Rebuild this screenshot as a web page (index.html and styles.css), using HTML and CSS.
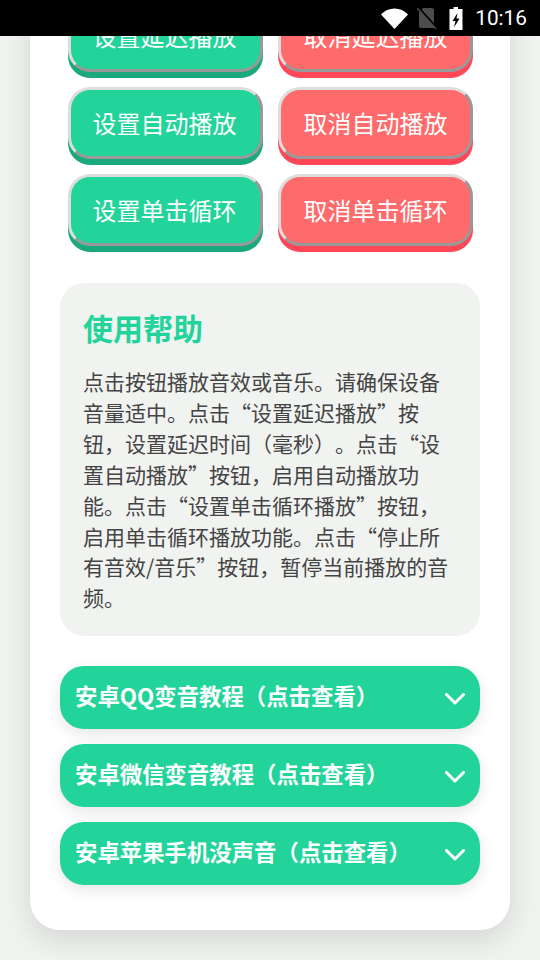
FILE: index.html
```html
<!DOCTYPE html>
<html lang="zh">
<head>
<meta charset="utf-8">
<title>音效</title>
<link rel="stylesheet" href="styles.css">
</head>
<body>
<div class="status">
  <svg class="i-wifi" viewBox="0 0 27 21"><path d="M0 6.500C3.500 2.500 8.300 0.500 13.500 0.500S23.500 2.500 27 6.500L13.500 21z"/></svg>
  <svg class="i-sim" viewBox="0 0 20 22"><path class="sim" d="M6 1H14.500Q17 1 17 3.500V21H4Q2 21 2 19V5z"/><path class="gap" d="M1 0L20 21"/><path class="slash" d="M0 1L19 22"/></svg>
  <svg class="i-bat" viewBox="0 0 14 23"><path d="M4.500 0H9V2H13.500V23H0.500V2H4.500z"/><path class="bolt" d="M8.500 6L3.500 14H6.500L5 20.500 10.500 11.500H7.500z"/></svg>
  <span class="time">10:16</span>
</div>
<main class="card">
  <div class="btn-grid">
    <button class="btn green">设置延迟播放</button>
    <button class="btn red">取消延迟播放</button>
    <button class="btn green">设置自动播放</button>
    <button class="btn red">取消自动播放</button>
    <button class="btn green">设置单击循环</button>
    <button class="btn red">取消单击循环</button>
  </div>
  <section class="help">
    <h2>使用帮助</h2>
    <p>点击按钮播放音效或音乐。请确保设备音量适中。点击“设置延迟播放”按钮，设置延迟时间（毫秒）。点击“设置自动播放”按钮，启用自动播放功能。点击“设置单击循环播放”按钮，启用单击循环播放功能。点击“停止所有音效/音乐”按钮，暂停当前播放的音频。</p>
  </section>
  <div class="acc-list">
    <div class="acc"><span>安卓QQ变音教程（点击查看）</span><svg viewBox="0 0 20 12"><path d="M1.500 1.500L10 10l8.500-8.500"/></svg></div>
    <div class="acc"><span>安卓微信变音教程（点击查看）</span><svg viewBox="0 0 20 12"><path d="M1.500 1.500L10 10l8.500-8.500"/></svg></div>
    <div class="acc"><span>安卓苹果手机没声音（点击查看）</span><svg viewBox="0 0 20 12"><path d="M1.500 1.500L10 10l8.500-8.500"/></svg></div>
  </div>
</main>
</body>
</html>
```
FILE: styles.css
```css
* { box-sizing: border-box; }
html, body { margin: 0; height: 960px; overflow: hidden; }
body {
  background: #f0f3f0;
  font-family: "Noto Sans CJK SC", "Noto Sans", sans-serif;
  padding: 0 30px;
}
.status {
  position: absolute;
  top: 0; left: 0; right: 0;
  height: 36px;
  background: #000;
  display: flex;
  align-items: center;
  justify-content: flex-end;
  color: #fff;
  z-index: 5;
}
.i-wifi { width: 27px; height: 21px; fill: #fff; margin-right: 9px; }
.i-sim { width: 20px; height: 22px; margin-right: 12px; }
.sim { fill: #4d4d4d; }
.gap { stroke: #000; stroke-width: 2; fill: none; }
.slash { stroke: #4d4d4d; stroke-width: 1.5; fill: none; }
.i-bat { width: 14px; height: 23px; fill: #fff; margin-right: 12px; }
.bolt { fill: #000; }
.time { font: 20.8px/36px Roboto, sans-serif; margin-right: 13px; }
.card {
  background: #fff;
  height: 930px;
  border-radius: 0 0 30px 30px;
  box-shadow: 0 10px 30px rgba(0,0,0,.12);
  padding: 0 30px;
}
.btn-grid {
  display: grid;
  grid-template-columns: 195px 195px;
  grid-auto-rows: 72px;
  gap: 15px;
  padding: 0 7px 0 8px;
}
.btn {
  border-width: 3px;
  border-style: solid;
  border-color: #ddd #999 #999 #ddd;
  border-radius: 22px;
  color: #fff;
  font: 24px/1 "Noto Sans CJK SC", sans-serif;
  padding: 0;
}
.green { background: #22d49a; box-shadow: 0 6px 0 #1aa97c; padding-right: 2px; }
.red { background: #ff6b6b; box-shadow: 0 6px 0 #ff4757; }
.help {
  margin-top: 37px;
  background: #f1f3f1;
  border-radius: 24px;
  padding: 22px 26px 22px 23px;
  height: 353px;
}
.help h2 {
  margin: 0 0 16px;
  color: #22d49a;
  font-size: 30px;
  line-height: 45px;
  font-weight: 700;
}
.help p {
  margin: 0;
  color: #444;
  font-size: 21px;
  line-height: 30.9px;
  text-spacing-trim: space-all;
  font-feature-settings: "chws" 0, "palt" 0;
}
.acc-list {
  margin-top: 30px;
  display: flex;
  flex-direction: column;
  gap: 15px;
}
.acc {
  height: 63px;
  background: #22d49a;
  border-radius: 24px;
  box-shadow: 0 5px 15px rgba(0,0,0,.1);
  color: #fff;
  font-size: 22.4px;
  font-weight: 700;
  padding: 0 15px 5px 15px;
  display: flex;
  align-items: center;
  justify-content: space-between;
}
.acc svg {
  width: 20px;
  height: 12px;
  margin-top: 8px;
  fill: none;
  stroke: #fff;
  stroke-width: 3;
  stroke-linecap: round;
  stroke-linejoin: round;
}
```
